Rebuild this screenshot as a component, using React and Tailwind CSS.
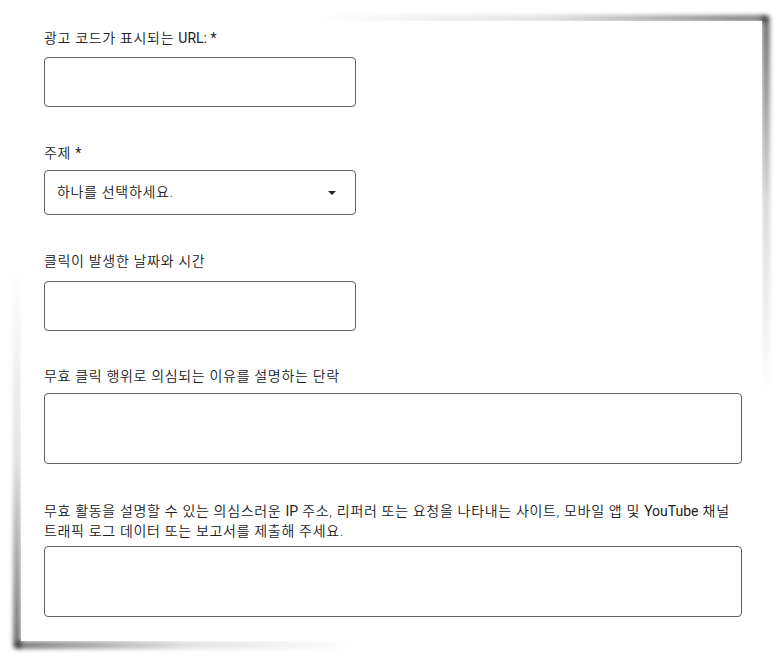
import React from "react";

function Label({ children, className = "" }) {
  return (
    <div className={"text-[14px] leading-5 text-[#202124] " + className}>{children}</div>
  );
}

function L({ children }) {
  return <span className="font-normal tracking-normal">{children}</span>;
}

export default function App() {
  return (
    <div className="min-h-[662px] w-[783px] bg-white pt-[21px] pl-[21px] font-['Roboto','Noto_Sans_CJK_KR',sans-serif] font-[350] tracking-[0.68px]">
      <div className="relative w-[741px] h-[620px]">
        {/* lifted-corner shadows */}
        <div className="absolute top-[-6px] right-[-5px] left-[40%] h-[7px] bg-gradient-to-r from-transparent via-[rgba(0,0,0,0.12)] to-[rgba(0,0,0,0.5)] blur-[2px]" />
        <div className="absolute top-[-5px] right-[-8px] bottom-[40%] w-[8px] bg-gradient-to-b from-[rgba(0,0,0,0.55)] via-[rgba(0,0,0,0.15)] to-transparent blur-[2px]" />
        <div className="absolute bottom-[-8px] left-[-5px] right-[55%] h-[8px] bg-gradient-to-l from-transparent via-[rgba(0,0,0,0.12)] to-[rgba(0,0,0,0.5)] blur-[2px]" />
        <div className="absolute bottom-[-7px] left-[-8px] top-[40%] w-[8px] bg-gradient-to-t from-[rgba(0,0,0,0.55)] via-[rgba(0,0,0,0.12)] to-transparent blur-[2px]" />

        <div className="relative h-full bg-white pl-[23px] pt-[7px] flex flex-col">
          <Label>광고 코드가 표시되는 <L>URL: *</L></Label>
          <div className="mt-[9px] w-[312px] h-[50px] border border-[#5f6368] rounded-[4px]" />

          <Label className="mt-[36px]">주제 <L>*</L></Label>
          <div className="mt-[7px] w-[312px] h-[45px] border border-[#5f6368] rounded-[4px] flex items-center justify-between pl-[12px] pr-[19px]">
            <span className="text-[14px] text-[#202124]">하나를 선택하세요.</span>
            <svg width="8" height="4" viewBox="0 0 8 4">
              <path d="M0 0 L8 0 L4 4 Z" fill="#202124" />
            </svg>
          </div>

          <Label className="mt-[36px]">클릭이 발생한 날짜와 시간</Label>
          <div className="mt-[10px] w-[312px] h-[50px] border border-[#5f6368] rounded-[4px]" />

          <Label className="mt-[35px]">무효 클릭 행위로 의심되는 이유를 설명하는 단락</Label>
          <div className="mt-[7px] w-[698px] h-[71px] border border-[#5f6368] rounded-[4px]" />

          <Label className="mt-[37px]">
            무효 활동을 설명할 수 있는 의심스러운 <L>IP</L> 주소, 리퍼러 또는 요청을 나타내는 사이트, 모바일 앱 및 <L>YouTube</L> 채널
            <br />
            트래픽 로그 데이터 또는 보고서를 제출해 주세요.
          </Label>
          <div className="mt-[5px] w-[698px] h-[71px] border border-[#5f6368] rounded-[4px]" />
        </div>
      </div>
    </div>
  );
}
